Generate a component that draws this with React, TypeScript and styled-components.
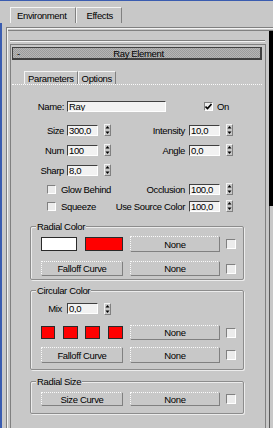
import React, { FC } from "react";
import styled, { createGlobalStyle } from "styled-components";

const face = "#c8c8c8";
const shadow = "#808080";
const dark = "#404040";
const light = "#f4f4f4";
const blue = "#3a5cb0";

const GlobalStyle = createGlobalStyle`
  html, body { margin: 0; padding: 0; background: ${face}; }
  body {
    font-family: "Liberation Sans", Arial, sans-serif;
    font-size: 9.5px;
    letter-spacing: -0.35px;
    line-height: 11px;
    color: #000;
  }
`;

const Window = styled.div`
  width: 273px;
  height: 428px;
  overflow: hidden;
  box-sizing: border-box;
  border-top: 1px solid ${blue};
  background: ${face};
  display: flex;
  flex-direction: column;
`;

const TabStrip = styled.div`
  height: 22px;
  display: flex;
  align-items: flex-end;
  padding-left: 10px;
  flex: none;
`;

const Tab = styled.div<{ $pl: number; $pr: number }>`
  height: 16px;
  display: flex;
  align-items: center;
  padding: 0 ${(p) => p.$pr}px 0 ${(p) => p.$pl}px;
  border-top: 1px solid ${light};
  border-left: 1px solid ${light};
  border-right: 1px solid ${shadow};
  box-sizing: border-box;
`;

const Stage = styled.div`
  flex: 1;
  display: flex;
  border-left: 2px solid ${blue};
  padding: 4px 0 0 4px;
  min-height: 0;
`;

const Page = styled.div`
  flex: 1;
  display: flex;
  border-left: 1px solid ${shadow};
  border-top: 1px solid ${shadow};
  box-shadow: inset 1px 1px 0 ${light};
  padding: 2px 0 0 1px;
`;

const Scroller = styled.div`
  flex: 1;
  display: flex;
  border-top: 1px solid ${shadow};
`;

const Content = styled.div`
  flex: 1;
  padding: 9px 0 0 2px;
`;

const ScrollBar = styled.div`
  width: 4px;
  flex: none;
  display: flex;
  flex-direction: column;
`;

const Thumb = styled.div`
  height: 175px;
  background: #000;
`;

const Track = styled.div`
  flex: 1;
  border-left: 1px solid #5a5a5a;
`;

const Separator = styled.div`
  width: 255px;
  border-top: 1px solid ${shadow};
  border-bottom: 1px solid ${light};
`;

const Rollout = styled.div`
  margin-top: 2px;
  width: 256px;
  box-sizing: border-box;
  height: 400px;
  border: 1px solid ${shadow};
  border-bottom: none;
  padding: 2px 3px 0 1px;
`;

const RolloutHeader = styled.div`
  height: 13px;
  box-sizing: border-box;
  display: grid;
  grid-template-columns: 1fr auto 1fr;
  align-items: center;
  padding-left: 4px;
  border: 1px solid ${dark};
  border-right-width: 2px;
  border-bottom-width: 2px;
  background: repeating-conic-gradient(#9c9c9c 0 25%, #b6b6b6 0 50%) 0 0 / 2px 2px;
`;

const SubTabs = styled.div`
  margin-top: 11px;
  height: 14px;
  display: flex;
  padding-left: 12px;
  border-bottom: 1px dotted #fafafa;
  box-sizing: border-box;
`;

const SubTab = styled.div`
  height: 13px;
  display: flex;
  align-items: center;
  padding: 0 3px 0 3px;
  border-top: 1px solid ${light};
  border-left: 1px solid ${light};
  border-right: 1px solid ${shadow};
  box-sizing: border-box;
`;

const Form = styled.div`
  margin-top: 15px;
`;

const Row = styled.div<{ $mt: number; $h?: number }>`
  display: flex;
  align-items: center;
  height: ${(p) => p.$h ?? 12}px;
  margin-top: ${(p) => p.$mt}px;
`;

const Half = styled.div<{ $w?: number; $pl?: number }>`
  display: flex;
  align-items: center;
  width: ${(p) => p.$w ?? 99}px;
  padding-left: ${(p) => p.$pl ?? 0}px;
  box-sizing: border-box;
  flex: none;
`;

const Label = styled.span<{ $w: number; $gap: number }>`
  width: ${(p) => p.$w}px;
  margin-right: ${(p) => p.$gap}px;
  text-align: right;
  white-space: nowrap;
  flex: none;
`;

const Input = styled.div<{ $w: number }>`
  width: ${(p) => p.$w}px;
  height: 11px;
  box-sizing: border-box;
  border-top: 1px solid ${dark};
  border-left: 1px solid ${dark};
  border-right: 1px solid #fff;
  border-bottom: 1px solid #fff;
  background: #f2f2f2;
  padding-left: 1px;
  line-height: 10px;
  white-space: nowrap;
  overflow: hidden;
  flex: none;
`;

const Spin = styled.div`
  width: 7px;
  height: 12px;
  margin-left: 6px;
  box-sizing: border-box;
  border-top: 1px solid ${light};
  border-left: 1px solid ${light};
  border-right: 1px solid ${shadow};
  border-bottom: 1px solid ${shadow};
  display: flex;
  flex: none;
`;

const Check = styled.div<{ $size?: number }>`
  width: ${(p) => p.$size ?? 9}px;
  height: ${(p) => p.$size ?? 9}px;
  box-sizing: border-box;
  border-top: 1px solid ${shadow};
  border-left: 1px solid ${shadow};
  border-right: 1px solid #fff;
  border-bottom: 1px solid #fff;
  background: #ececec;
  display: flex;
  flex: none;
`;

const CheckText = styled.span`
  margin-left: 5px;
  white-space: nowrap;
`;

const Group = styled.fieldset<{ $mt: number }>`
  margin: ${(p) => p.$mt}px 0 0 18px;
  padding: 0;
  min-width: 0;
  width: 214px;
  box-sizing: border-box;
  border: 1px solid #8c8c8c;
  border-radius: 2px;
  box-shadow: inset 1px 1px 0 #ececec, 1px 1px 0 #ececec;
`;

const Legend = styled.legend`
  margin-left: 5px;
  padding: 0 1px;
  height: 11px;
  line-height: 11px;
  background: ${face};
`;

const GroupBody = styled.div<{ $pt: number; $pb: number }>`
  padding: ${(p) => p.$pt}px 0 ${(p) => p.$pb}px 10px;
`;

const Slot = styled.div`
  width: 82px;
  display: flex;
  align-items: center;
  justify-content: space-between;
  flex: none;
`;

const Swatch = styled.div<{ $w: number; $h: number; $color: string }>`
  width: ${(p) => p.$w}px;
  height: ${(p) => p.$h}px;
  box-sizing: border-box;
  border: 1px solid #2a2a2a;
  background: ${(p) => p.$color};
`;

const Button = styled.div<{ $w: number; $ml?: number }>`
  width: ${(p) => p.$w}px;
  height: 100%;
  margin-left: ${(p) => p.$ml ?? 0}px;
  box-sizing: border-box;
  border-top: 1px dotted #fafafa;
  border-left: 1px dotted #fafafa;
  border-right: 1px solid ${shadow};
  border-bottom: 1px solid ${shadow};
  display: flex;
  align-items: center;
  justify-content: center;
  white-space: nowrap;
  flex: none;
`;

const SpinIcon: FC = () => (
  <svg width="5" height="10" viewBox="0 0 5 10" style={{ margin: "0 auto" }}>
    <path d="M2.5 1 L4.5 3.5 H0.5 Z" fill="#000" />
    <path d="M0.5 6.5 H4.5 L2.5 9 Z" fill="#000" />
  </svg>
);

const Field: FC<{ label: string; value: string; lw: number; gap: number; iw?: number }> = ({
  label,
  value,
  lw,
  gap,
  iw = 31,
}) => (
  <>
    <Label $w={lw} $gap={gap}>
      {label}
    </Label>
    <Input $w={iw}>{value}</Input>
    <Spin>
      <SpinIcon />
    </Spin>
  </>
);

const LeftField: FC<{ label: string; value: string }> = ({ label, value }) => (
  <Half>
    <Field label={label} value={value} lw={52} gap={3} />
  </Half>
);

const RightField: FC<{ label: string; value: string }> = ({ label, value }) => (
  <Half $w={130}>
    <Field label={label} value={value} lw={74} gap={4} />
  </Half>
);

const CheckItem: FC<{ text: string }> = ({ text }) => (
  <Half $pl={35}>
    <Check />
    <CheckText>{text}</CheckText>
  </Half>
);

const MapCheck: FC = () => (
  <Check $size={10} style={{ marginLeft: 6 }} />
);

export default function App() {
  return (
    <>
      <GlobalStyle />
      <Window>
        <TabStrip>
          <Tab $pl={6} $pr={9}>Environment</Tab>
          <Tab $pl={9} $pr={8}>Effects</Tab>
        </TabStrip>
        <Stage>
          <Page>
            <Scroller>
              <Content>
                <Separator />
                <Rollout>
                  <RolloutHeader>
                    <span>-</span>
                    <span>Ray Element</span>
                    <span />
                  </RolloutHeader>
                  <SubTabs>
                    <SubTab>Parameters</SubTab>
                    <SubTab>Options</SubTab>
                  </SubTabs>
                  <Form>
                    <Row $mt={0}>
                      <Label $w={52} $gap={3}>
                        Name:
                      </Label>
                      <Input $w={99}>Ray</Input>
                      <Check style={{ marginLeft: 38 }}>
                        <svg width="7" height="7" viewBox="0 0 7 7">
                          <path d="M0.5 3.5 L2.5 5.5 L6.5 1" stroke="#000" strokeWidth="1.6" fill="none" />
                        </svg>
                      </Check>
                      <CheckText style={{ marginLeft: 4 }}>On</CheckText>
                    </Row>
                    <Row $mt={12}>
                      <LeftField label="Size" value="300,0" />
                      <RightField label="Intensity" value="10,0" />
                    </Row>
                    <Row $mt={8}>
                      <LeftField label="Num" value="100" />
                      <RightField label="Angle" value="0,0" />
                    </Row>
                    <Row $mt={8}>
                      <LeftField label="Sharp" value="8,0" />
                    </Row>
                    <Row $mt={7}>
                      <CheckItem text="Glow Behind" />
                      <RightField label="Occlusion" value="100,0" />
                    </Row>
                    <Row $mt={5}>
                      <CheckItem text="Squeeze" />
                      <RightField label="Use Source Color" value="100,0" />
                    </Row>
                  </Form>

                  <Group $mt={9}>
                    <Legend>Radial Color</Legend>
                    <GroupBody $pt={4} $pb={3}>
                      <Row $mt={0} $h={16}>
                        <Slot>
                          <Swatch $w={36} $h={14} $color="#ffffff" />
                          <Swatch $w={38} $h={14} $color="#ff0000" />
                        </Slot>
                        <Button $w={90} $ml={7}>None</Button>
                        <MapCheck />
                      </Row>
                      <Row $mt={9} $h={15}>
                        <Button $w={82}>Falloff Curve</Button>
                        <Button $w={90} $ml={7}>None</Button>
                        <MapCheck />
                      </Row>
                    </GroupBody>
                  </Group>

                  <Group $mt={5}>
                    <Legend>Circular Color</Legend>
                    <GroupBody $pt={7} $pb={6}>
                      <Row $mt={0} $h={11}>
                        <Half>
                          <Field label="Mix" value="0,0" lw={21} gap={5} />
                        </Half>
                      </Row>
                      <Row $mt={11} $h={15}>
                        <Slot>
                          <Swatch $w={14} $h={13} $color="#ff0000" />
                          <Swatch $w={15} $h={13} $color="#ff0000" />
                          <Swatch $w={15} $h={13} $color="#ff0000" />
                          <Swatch $w={15} $h={13} $color="#ff0000" />
                        </Slot>
                        <Button $w={90} $ml={7}>None</Button>
                        <MapCheck />
                      </Row>
                      <Row $mt={7} $h={16}>
                        <Button $w={82}>Falloff Curve</Button>
                        <Button $w={90} $ml={7}>None</Button>
                        <MapCheck />
                      </Row>
                    </GroupBody>
                  </Group>

                  <Group $mt={6}>
                    <Legend>Radial Size</Legend>
                    <GroupBody $pt={5} $pb={7}>
                      <Row $mt={0} $h={14}>
                        <Button $w={82}>Size Curve</Button>
                        <Button $w={90} $ml={7}>None</Button>
                        <MapCheck />
                      </Row>
                    </GroupBody>
                  </Group>
                </Rollout>
              </Content>
              <ScrollBar>
                <Thumb />
                <Track />
              </ScrollBar>
            </Scroller>
          </Page>
        </Stage>
      </Window>
    </>
  );
}
